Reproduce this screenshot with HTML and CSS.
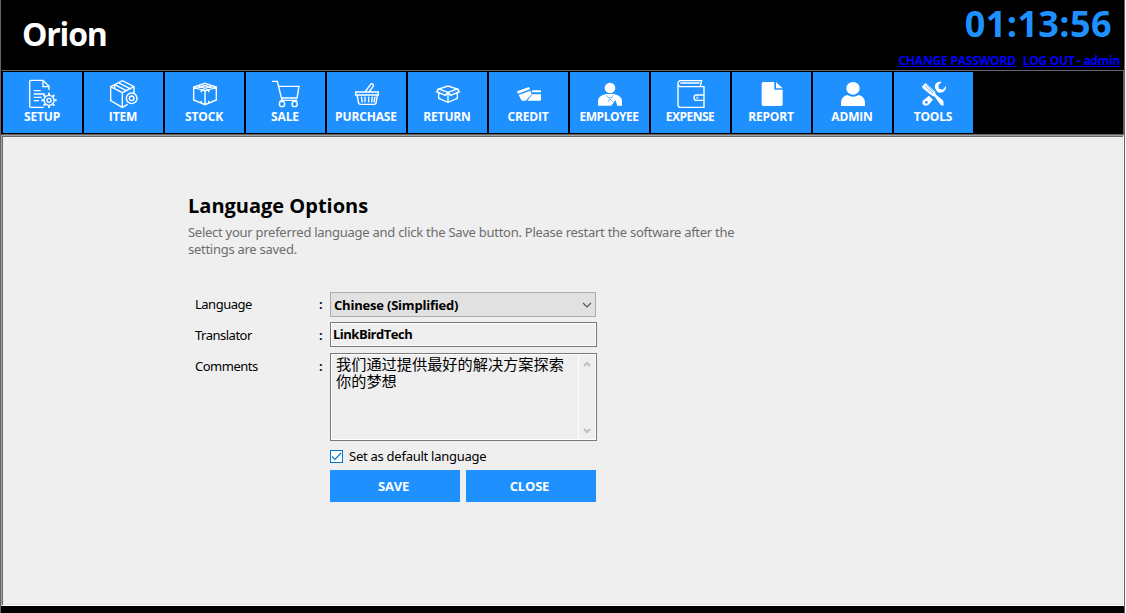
FILE: index.html
```
<!DOCTYPE html>
<html lang="en">
<head>
<meta charset="utf-8">
<title>Orion - Language Options</title>
<link rel="stylesheet" href="styles.css">
</head>
<body>
<div class="window">
  <header class="header">
    <h1 class="brand">Orion</h1>
    <div class="session">
      <div class="clock">01:13:56</div>
      <div class="links"><a class="link-password" href="#">CHANGE PASSWORD</a><a class="link-logout" href="#">LOG OUT - admin</a></div>
    </div>
  </header>
  <nav class="toolbar">
    <button class="tool"><svg class="icon line" viewBox="0 0 84 84"><path d="M60 30V19L42 1H6Q2 1 2 5V78Q2 82 6 82H44M42 1V20H61M14 32H35M14 42H48M14 52H38M14 62H30"/><circle cx="60" cy="61" r="15"/><circle cx="60" cy="61" r="6"/><path stroke-width="6" d="M60 38v7M60 77v7M37 61h7M76 61h7M44 45l5 5M71 72l5 5M76 45l-5 5M49 72l-5 5"/></svg><span>SETUP</span></button>
    <button class="tool"><svg class="icon line" viewBox="0 0 84 84"><path d="M72 39V20L37 2L2 20V62L37 82L53 73M2 20L37 38L72 20M37 38V82M14 14L49 32M25 8L60 26M14 14V24"/><circle cx="65" cy="55" r="16"/><circle cx="65" cy="55" r="7"/></svg><span>ITEM</span></button>
    <button class="tool"><svg class="icon line" viewBox="0 0 84 84"><path d="M42 10L76 21V60L42 74L8 60V21ZM8 21L42 33L76 21M42 33V74M19 17L53 29M31 13L65 25M65 17L31 29M53 13L19 25M31 29V37M53 29V37M31 62V69M53 62V69"/></svg><span>STOCK</span></button>
    <button class="tool"><svg class="icon line" viewBox="0 0 84 84"><path d="M0 4H16L30 61H76M20 19H81L75 54H28M27 61L23 67"/><circle cx="30" cy="72" r="8"/><circle cx="68" cy="72" r="8"/></svg><span>SALE</span></button>
    <button class="tool"><svg class="icon line" viewBox="0 0 84 84"><path d="M8 36H76V45H8ZM12 45L17 70Q18 73 22 73H64Q68 73 69 70L73 45M25 50L28 67M36 50V67M47 50V67M58 50L56 67M66 50L63 67M36 36L53 13Q56 10 60 13Q63 16 60 20L48 36"/></svg><span>PURCHASE</span></button>
    <button class="tool"><svg class="icon line" viewBox="0 0 84 84"><path d="M42 18L70 27L42 37L14 27ZM14 27L8 35L34 46L42 37L50 46L76 35L70 27M14 39V55L42 67L70 55V39M42 38V67"/></svg><span>RETURN</span></button>
    <button class="tool"><svg class="icon solid" viewBox="0 0 84 84"><path d="M6 34L42 21L45 28L9 41ZM11 45L46 32L50 43L32 62H20ZM52 31H76Q78 31 78 34V37H50ZM52 43H78V60Q78 62 75 62H37Z"/></svg><span>CREDIT</span></button>
    <button class="tool tight"><svg class="icon solid" viewBox="0 0 84 84"><circle cx="42" cy="24" r="16"/><path d="M6 77V62Q7 47 31 42H53Q77 47 78 62V77H64L58 60L46 77Z"/><path class="cut" d="M31 46Q41 62 53 46M42 57L36 66M42 57L50 65"/></svg><span>EMPLOYEE</span></button>
    <button class="tool tight"><svg class="icon line" viewBox="0 0 84 84"><path d="M3 11Q3 2 11 2H74L70 19M3 11Q3 20 12 20H81V82H11Q3 82 3 74V11M10 9H68M81 45H59Q51 45 51 53Q51 61 59 61H81"/><circle cx="61" cy="53" r="1"/></svg><span>EXPENSE</span></button>
    <button class="tool"><svg class="icon solid" viewBox="0 0 84 84"><path d="M16 6H49V29H74V73Q74 78 69 78H16Q11 78 11 73V11Q11 6 16 6ZM54 6L74 25H54Z"/></svg><span>REPORT</span></button>
    <button class="tool"><svg class="icon solid" viewBox="0 0 84 84"><ellipse cx="42" cy="25" rx="20" ry="19"/><path d="M6 78V69Q6 50 25 45Q42 56 59 45Q78 50 78 69V78Z"/></svg><span>ADMIN</span></button>
    <button class="tool"><svg class="icon solid" viewBox="0 0 84 84"><path d="M6 19L17 9L45 34L47 43L70 62L71 77L62 75L44 50L36 47L8 25Z"/><path class="cut" d="M15 18L39 40M20 14L43 36"/><path d="M78 18L68 29L57 26L55 16L65 6C51 2 42 13 45 25L53 37C67 42 80 31 78 18Z"/><path d="M27 47L39 59L27 73C16 84 1 72 10 61Z"/><circle class="hole" cx="19" cy="67" r="4"/></svg><span>TOOLS</span></button>
  </nav>
  <main class="content">
    <section class="options">
      <h2 class="title">Language Options</h2>
      <p class="intro">Select your preferred language and click the Save button. Please restart the software after the<br>settings are saved.</p>
      <div class="form">
        <div class="label"><span>Language</span><b>:</b></div>
        <div class="select"><span>Chinese (Simplified)</span><svg width="10" height="6" viewBox="0 0 10 6"><path d="M1 1L5 5L9 1"/></svg></div>
        <div class="label"><span>Translator</span><b>:</b></div>
        <div class="input">LinkBirdTech</div>
        <div class="label"><span>Comments</span><b>:</b></div>
        <div class="comments"><div class="note"><div>我们通过提供最好的解决方案探索</div><div>你的梦想</div></div>
          <div class="scrollbar"><svg width="8" height="6" viewBox="0 0 8 6"><path d="M1 5L4 2L7 5"/></svg><svg width="8" height="6" viewBox="0 0 8 6"><path d="M1 1L4 4L7 1"/></svg></div>
        </div>
        <div class="default"><span class="check"><svg width="11" height="11" viewBox="0 0 11 11"><path d="M1 5.5L4 8.5L10 2"/></svg></span><span>Set as default language</span></div>
        <div class="actions"><button>SAVE</button><button>CLOSE</button></div>
      </div>
    </section>
  </main>
  <footer class="footer"></footer>
</div>
</body>
</html>
```
FILE: styles.css
```
* { box-sizing: border-box; }
body { margin: 0; background: #fff; font: 13px/17px "Noto Sans", "Open Sans", sans-serif; color: #000; }
h1, h2, p { margin: 0; }
button { border: 0; padding: 0; background: #1e90ff; color: #fff; font: bold 12px/17px "Open Sans", "Noto Sans", sans-serif; }

.window { width: 1125px; height: 613px; display: flex; flex-direction: column; background: #000; border-left: 1px solid #646464; border-right: 1px solid #646464; overflow: hidden; }
.header { height: 70px; flex: none; display: flex; justify-content: space-between; color: #fff; }
.brand { padding: 12px 0 0 21px; font: bold 32px/44px "Open Sans", sans-serif; letter-spacing: -1.2px; }
.session { display: flex; flex-direction: column; align-items: flex-end; padding-right: 4px; }
.clock { height: 53px; padding-right: 8px; font: bold 36px/48px "Open Sans", sans-serif; letter-spacing: 0.4px; color: #1e90ff; }
.links { display: flex; gap: 7px; font: bold 12px/16px "Open Sans", sans-serif; white-space: nowrap; }
.links a { color: #00f; }
.link-password { letter-spacing: -0.2px; }
.link-logout { letter-spacing: -0.32px; }

.toolbar { height: 65px; flex: none; display: flex; gap: 2px; padding: 1px 0 1px 1px; border: 1px solid #646464; border-left-color: #000; }
.tool { width: 79px; height: 61px; display: flex; flex-direction: column; align-items: center; padding-top: 8px; letter-spacing: -0.15px; }
.tool span { line-height: 17px; margin-right: 1px; }
.tight { letter-spacing: -0.5px; }
.icon { width: 28px; height: 28px; flex: none; display: block; overflow: visible; }
.line { fill: none; stroke: #fff; stroke-width: 4.2; }
.solid { fill: #fff; }
.cut { fill: none; stroke: #1e90ff; stroke-width: 2; }
.hole { fill: #1e90ff; }

.content { flex: 1; background: #efefef; border: 1px solid #fff; border-top-color: #a0a0a0; border-left-color: #a0a0a0; box-shadow: inset 1px 1px #696969, inset -1px -1px #e3e3e3; padding: 56px 0 0 186px; }
.title { font: bold 20px/28px "Open Sans", sans-serif; }
.intro { margin-top: 4px; color: #6d6d6d; white-space: nowrap; letter-spacing: -0.27px; }
.form { margin: 34px 0 0 7px; display: grid; grid-template-columns: 135px 267px; grid-template-rows: 25px 25px 88px; row-gap: 6px; }
.label { display: flex; justify-content: space-between; padding: 4px 8px 0 0; letter-spacing: -0.5px; }
.label b { font-weight: 600; }
.select { width: 266px; height: 25px; display: flex; align-items: center; justify-content: space-between; padding: 1px 3px 0; border: 1px solid #adadad; background: #e1e1e1; font: bold 13px/17px "Open Sans", sans-serif; letter-spacing: -0.2px; }
.select svg, .scrollbar svg { fill: none; stroke: #555; stroke-width: 1.2; }
.input { margin-top: -1px; height: 25px; padding: 3px 2px; border: 1px solid #7a7a7a; box-shadow: inset 0 0 0 1px #fff; font: bold 13px/17px "Open Sans", sans-serif; letter-spacing: -0.5px; }
.comments { margin-top: -1px; height: 88px; display: flex; justify-content: space-between; padding: 1px; border: 1px solid #7a7a7a; box-shadow: inset 0 0 0 1px #fff; }
.note { padding: 0 0 0 4px; font: 15.2px/17px "Noto Sans CJK SC", sans-serif; white-space: nowrap; }
.scrollbar { width: 17px; display: flex; flex-direction: column; justify-content: space-between; align-items: center; padding: 6px 1px 5px 0; border-left: 1px solid #fff; }
.scrollbar svg { stroke: #bfbfbf; stroke-width: 2; }
.default { grid-column: 2; display: flex; align-items: center; gap: 6px; height: 17px; letter-spacing: -0.26px; }
.check { width: 13px; height: 13px; border: 1px solid #0078d7; background: #fff; }
.check svg { display: block; fill: none; stroke: #0078d7; stroke-width: 1.2; }
.actions { grid-column: 2; display: flex; gap: 6px; margin-top: -1px; }
.actions button { width: 130px; height: 32px; padding-right: 3px; font-size: 13px; letter-spacing: -0.2px; }
.footer { height: 7px; flex: none; }
```
